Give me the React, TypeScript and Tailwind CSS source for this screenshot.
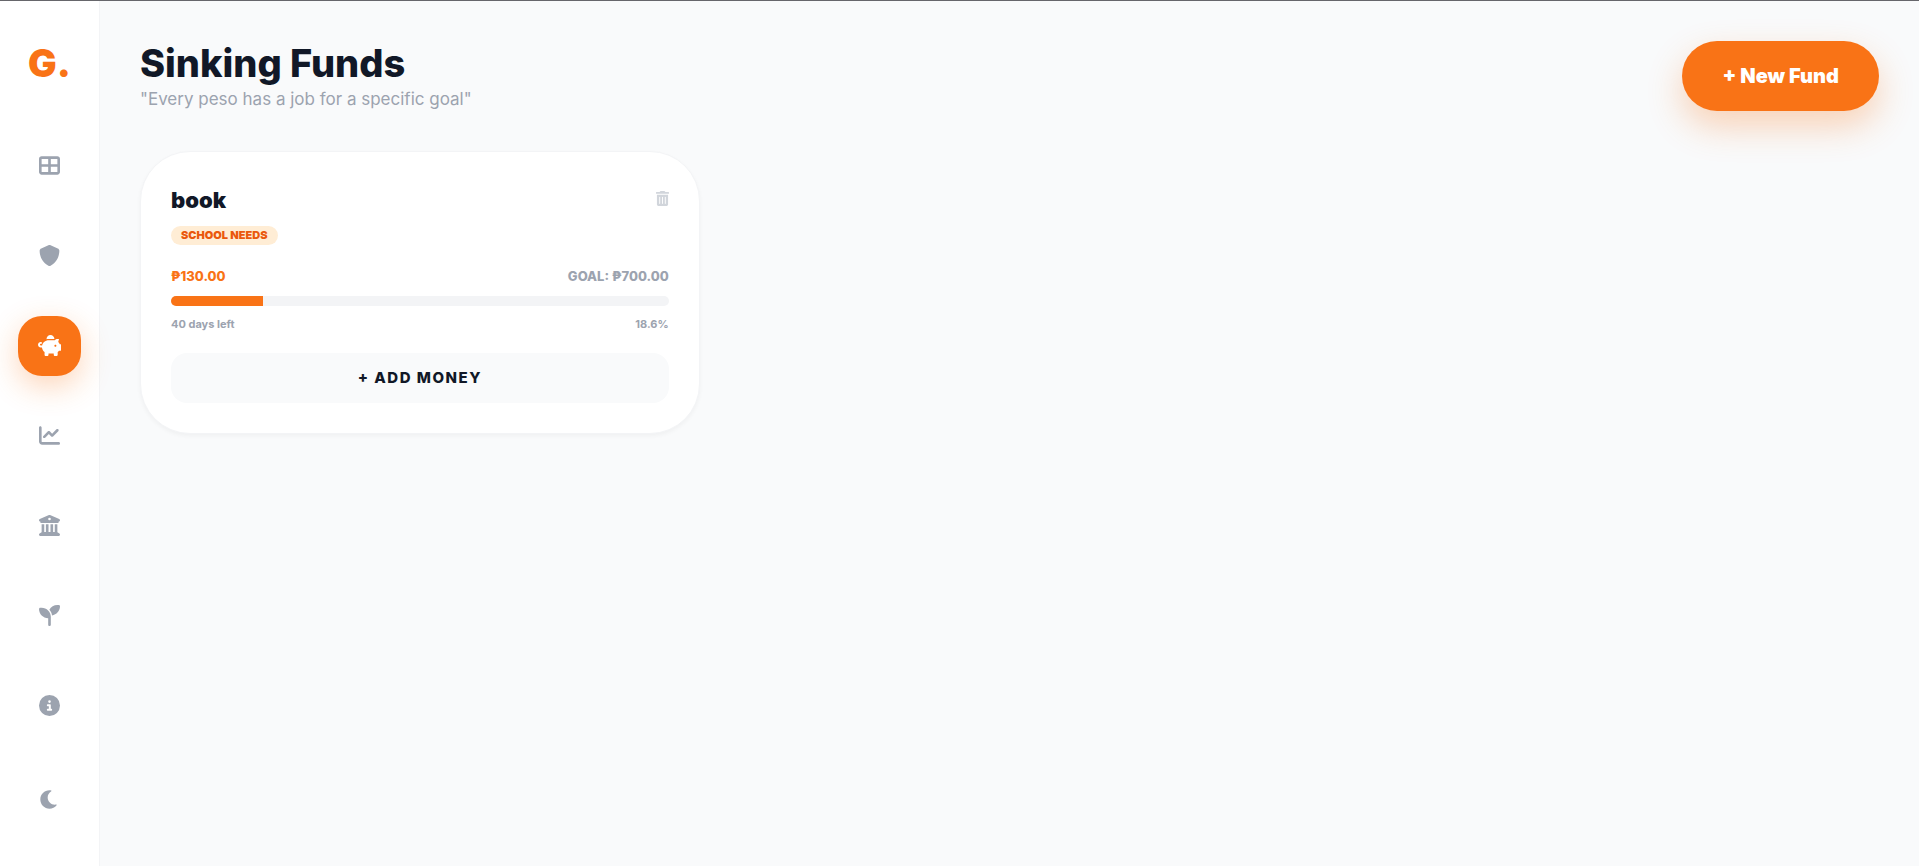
import React, { useState } from 'react';
import {
  FaTableCellsLarge,
  FaShield,
  FaChartLine,
  FaBuildingColumns,
  FaSeedling,
  FaCircleInfo,
} from 'react-icons/fa6';

interface IconProps {
  className?: string;
}

interface Fund {
  id: number;
  name: string;
  category: string;
  saved: number;
  goal: number;
  daysLeft: number;
}

function PiggyBank({ className }: IconProps) {
  return (
    <svg viewBox="0 0 576 512" fill="currentColor" className={className}>
      <path d="M400 96L399.1 96.66C394.7 96.22 390.4 96 384 96H256C239.5 96 223.5 98.08 208.2 102C208.1 100 208 98.02 208 96C208 42.98 250.1 0 304 0C357 0 400 42.98 400 96zM384 128C387.5 128 390.1 128.1 394.4 128.3C398.7 128.6 402.9 129 407 129.6C424.6 109.1 450.8 96 480 96H512L493.2 171.1C509.1 185.9 521.9 203.6 530.4 224H544C561.7 224 576 238.3 576 256V352C576 369.7 561.7 384 544 384H512C502.9 396.1 492.1 406.9 480 416V480C480 497.7 465.7 512 448 512H416C398.3 512 384 497.7 384 480V448H256V480C256 497.7 241.7 512 224 512H192C174.3 512 160 497.7 160 480V416C125.1 389.8 101.3 349.8 96.79 304H68C30.44 304 0 273.6 0 236C0 198.4 30.44 168 68 168H72C85.25 168 96 178.7 96 192C96 205.3 85.25 216 72 216H68C56.95 216 48 224.1 48 236C48 247 56.95 256 68 256H99.2C111.3 196.2 156.9 148.5 215.5 133.2C228.4 129.8 241.1 128 256 128H384zM424 240C410.7 240 400 250.7 400 264C400 277.3 410.7 288 424 288C437.3 288 448 277.3 448 264C448 250.7 437.3 240 424 240z" />
    </svg>
  );
}

function Moon({ className }: IconProps) {
  return (
    <svg viewBox="0 0 512 512" fill="currentColor" className={className}>
      <path d="M32 256c0-123.8 100.3-224 223.8-224c11.36 0 29.7 1.668 40.9 3.746c9.616 1.777 11.75 14.63 3.279 19.44C245 86.5 211.2 144.6 211.2 207.8c0 109.7 99.71 193 208.3 172.3c9.561-1.805 16.28 9.324 10.11 16.95C387.9 448.6 324.8 480 255.8 480C132.1 480 32 379.8 32 256z" />
    </svg>
  );
}

function Trash({ className }: IconProps) {
  return (
    <svg viewBox="0 0 448 512" fill="currentColor" className={className}>
      <path
        fillRule="evenodd"
        d="M135 18C140 7 151 0 163 0h121c12 0 23 7 29 18l7 14h112c9 0 16 7 16 16v32c0 9-7 16-16 16H16C7 96 0 89 0 80V48c0-9 7-16 16-16h112zM32 128h384v336c0 26-22 48-48 48H80c-26 0-48-22-48-48zm96 64c-9 0-16 7-16 16v224c0 9 7 16 16 16s16-7 16-16V208c0-9-7-16-16-16zm96 0c-9 0-16 7-16 16v224c0 9 7 16 16 16s16-7 16-16V208c0-9-7-16-16-16zm96 0c-9 0-16 7-16 16v224c0 9 7 16 16 16s16-7 16-16V208c0-9-7-16-16-16z"
      />
    </svg>
  );
}

const navItems = [
  { id: 'dashboard', name: 'Dashboard', icon: FaTableCellsLarge },
  { id: 'emergency', name: 'Emergency fund', icon: FaShield },
  { id: 'sinking', name: 'Sinking funds', icon: PiggyBank },
  { id: 'reports', name: 'Reports', icon: FaChartLine },
  { id: 'bank', name: 'Bank', icon: FaBuildingColumns },
  { id: 'growth', name: 'Growth', icon: FaSeedling },
  { id: 'about', name: 'About', icon: FaCircleInfo },
];

const funds: Fund[] = [
  { id: 1, name: 'book', category: 'School Needs', saved: 130, goal: 700, daysLeft: 40 },
];

const peso = (value: number) => `₱${value.toFixed(2)}`;

function Sidebar() {
  const [active, setActive] = useState('sinking');

  return (
    <aside className="flex w-[100px] flex-none flex-col items-center border-r border-[#f3f4f6] bg-white pt-10 pb-9">
      <div className="text-[38px] leading-[44px] font-black text-[#f97316]">G.</div>
      <nav className="mt-[51px] flex flex-col gap-[30px]">
        {navItems.map((item) => {
          const Icon = item.icon;
          return (
            <button
              key={item.id}
              type="button"
              aria-label={item.name}
              onClick={() => setActive(item.id)}
              className={`flex h-[60px] w-[63px] items-center justify-center rounded-3xl pb-px ${
                active === item.id
                  ? 'bg-[#f97316] text-white shadow-[0_10px_30px_rgba(249,115,22,0.3)]'
                  : 'text-[#9ca3af]'
              }`}
            >
              <Icon className="h-[21px] w-auto" />
            </button>
          );
        })}
      </nav>
      <button type="button" aria-label="Dark mode" className="mt-auto flex h-[60px] w-[63px] items-center justify-center pb-px text-[#9ca3af]">
        <Moon className="h-[21px] w-auto" />
      </button>
    </aside>
  );
}

function FundCard({ fund }: { fund: Fund }) {
  const percent = (fund.saved / fund.goal) * 100;

  return (
    <article className="rounded-[50px] border border-[#f3f4f6] bg-white p-[30px] shadow-[0_2px_4px_rgba(0,0,0,0.04)]">
      <div className="flex items-start justify-between">
        <div>
          <h2 className="text-[22px] leading-[36px] font-black">{fund.name}</h2>
          <span className="mt-2 block rounded-full bg-[#ffedd5] px-[10px] py-[2px] text-[11px] leading-[15px] font-black text-[#ea580c] uppercase">
            {fund.category}
          </span>
        </div>
        <button type="button" aria-label="Delete fund" className="mt-[9px] text-[#d1d5db]">
          <Trash className="h-[15px] w-[13px]" />
        </button>
      </div>

      <div className="mt-5 flex justify-between text-[13px] leading-[22px] font-extrabold">
        <span className="text-[#f97316]">{peso(fund.saved)}</span>
        <span className="text-[#9ca3af]">GOAL: {peso(fund.goal)}</span>
      </div>
      <div className="mt-[9px] h-[10px] overflow-hidden rounded-full bg-[#f3f4f6]">
        <div className="h-full bg-[#f97316]" style={{ width: `${percent}%` }} />
      </div>
      <div className="mt-[10px] flex justify-between text-[11px] leading-[17px] font-bold text-[#9ca3af]">
        <span>{fund.daysLeft} days left</span>
        <span>{percent.toFixed(1)}%</span>
      </div>

      <button type="button" className="mt-5 h-[50px] w-full rounded-2xl bg-[#f9fafb] text-[15px] font-extrabold tracking-[1.5px]">
        + ADD MONEY
      </button>
    </article>
  );
}

export default function App() {
  return (
    <div className="flex min-h-screen border-t border-[#66666b] bg-[#f9fafb] font-['Inter',sans-serif] text-[#111827]">
      <Sidebar />
      <main className="flex-1 p-10">
        <header className="flex items-start justify-between">
          <div>
            <h1 className="text-[38px] leading-[44px] font-extrabold">Sinking Funds</h1>
            <p className="mt-[2px] text-[17px] leading-6 text-[#9ca3af]">"Every peso has a job for a specific goal"</p>
          </div>
          <button
            type="button"
            className="h-[70px] rounded-full bg-[#f97316] px-10 text-[20px] font-black text-white shadow-[0_15px_35px_rgba(249,115,22,0.3)]"
          >
            + New Fund
          </button>
        </header>

        <section className="mt-10 grid grid-cols-3 gap-[30px]">
          {funds.map((fund) => (
            <FundCard key={fund.id} fund={fund} />
          ))}
        </section>
      </main>
    </div>
  );
}
